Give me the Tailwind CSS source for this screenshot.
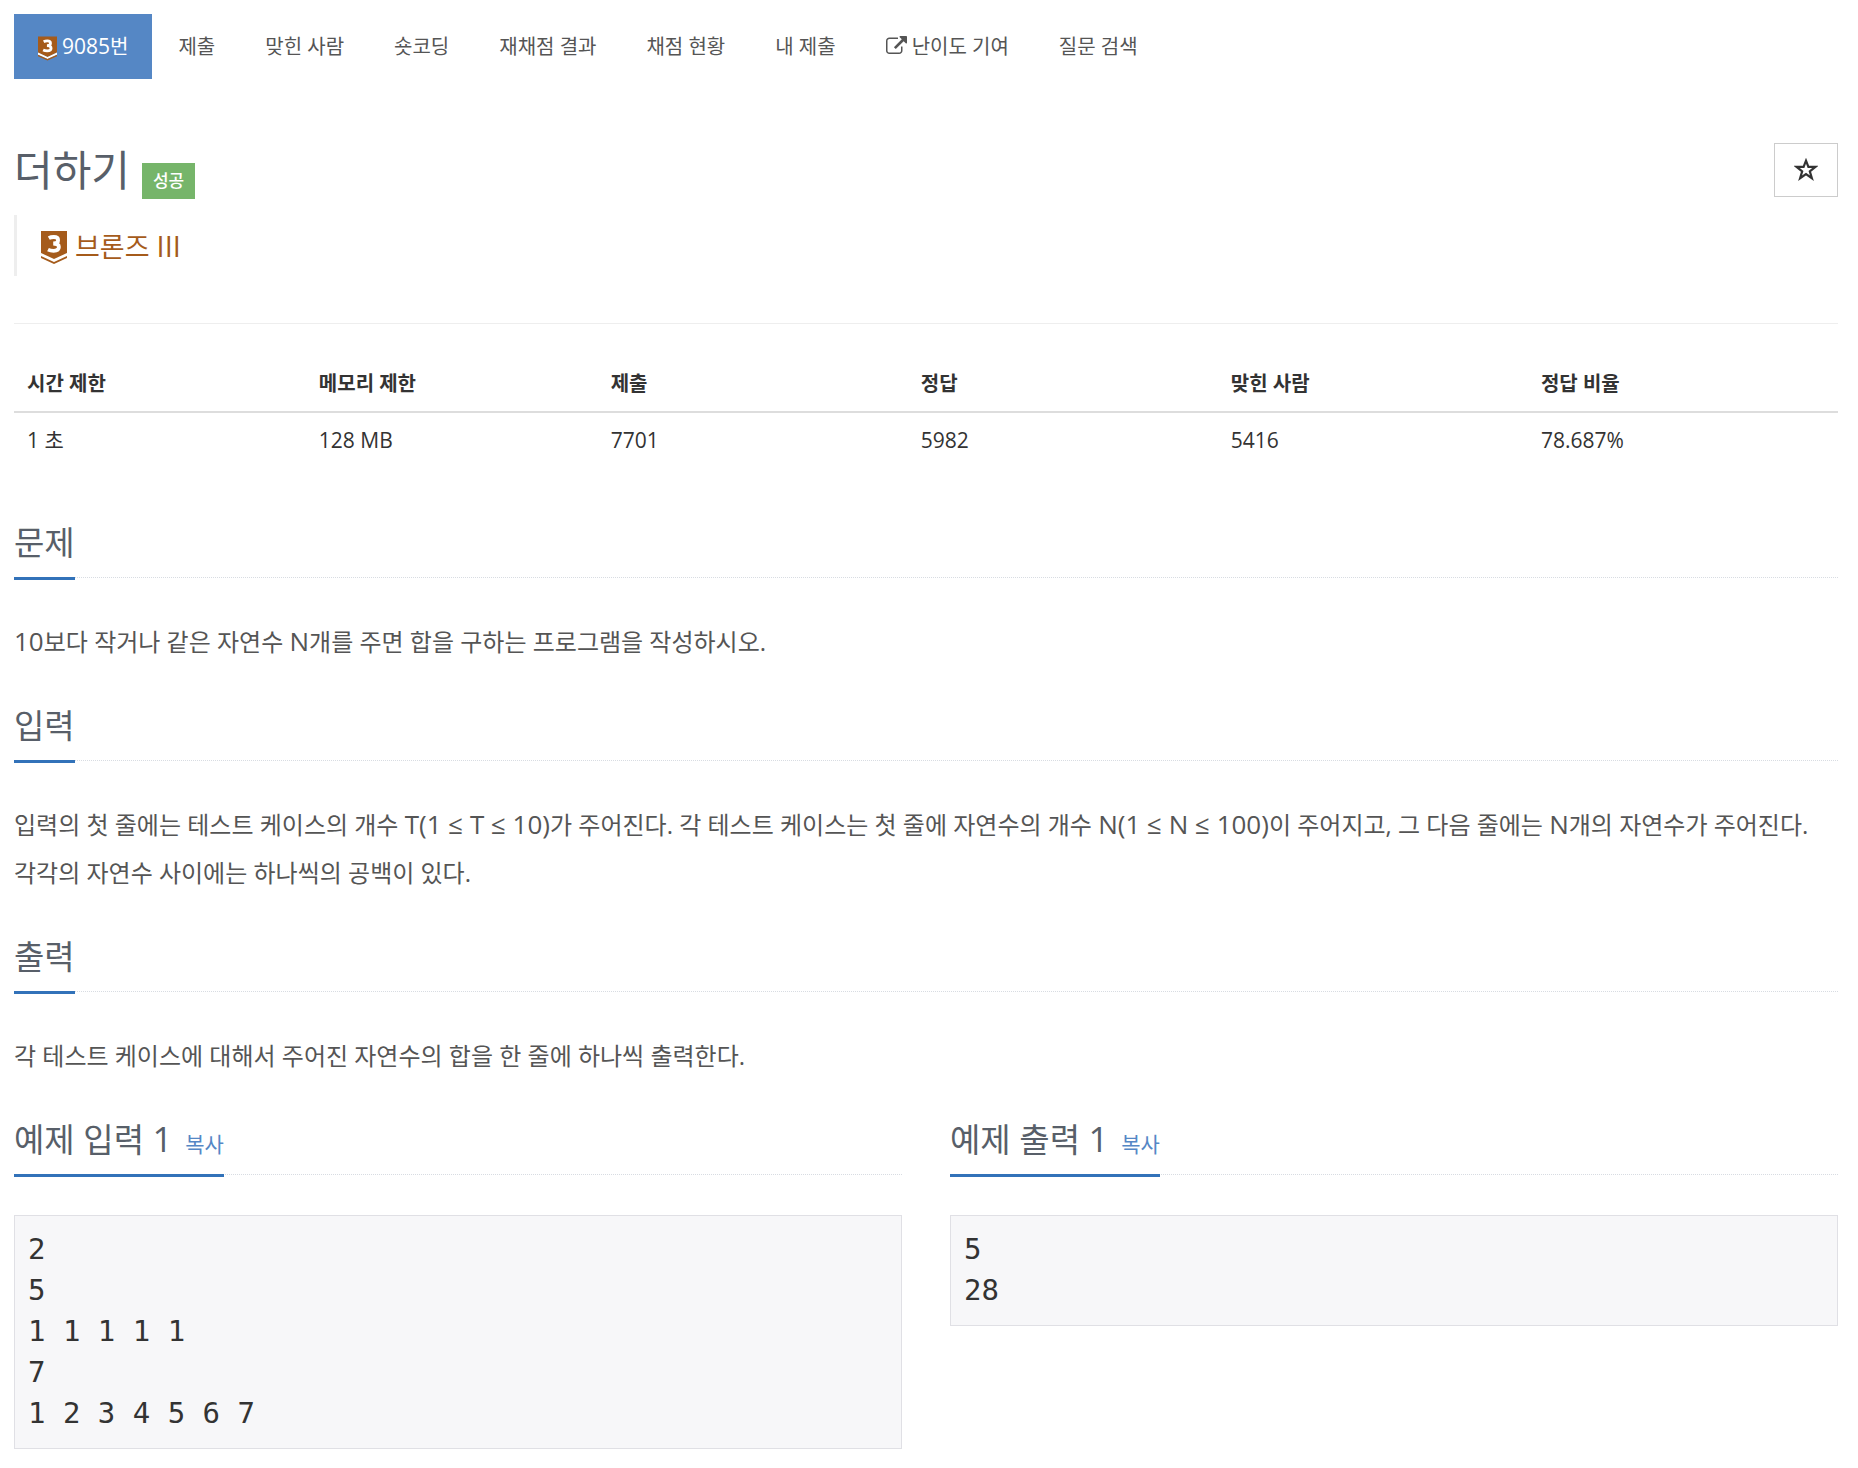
<!DOCTYPE html>
<html lang="ko">

<head>
    <meta charset="UTF-8" />
    <meta name="viewport" content="width=device-width, initial-scale=1.0" />
    <title>9085번: 더하기</title>
    <script src="https://cdn.jsdelivr.net/npm/@tailwindcss/browser@4"></script>
</head>

<body class="bg-white pt-[14px] pr-5 pb-[18px] pl-[14px] font-['Open_Sans','Noto_Sans_CJK_KR',sans-serif] text-[20px] leading-[29px] text-[#333333]">
    <nav>
        <ul class="flex flex-wrap gap-[2px] text-[#555555]">
            <li>
                <a href="#" class="flex items-center gap-[5px] bg-[#5587c5] px-6 py-[18px] text-white">
                    <svg class="mt-1 h-[25px] w-[19px]" viewBox="0 0 26 33" aria-hidden="true">
                        <path fill="#a55b1b" d="M0 0h26v22l-13 6-13-6z" />
                        <path fill="#fff" d="M0 22l13 6 13-6v3l-13 6-13-6z" />
                        <path fill="#a55b1b" d="M0 25l13 6 13-6v2l-13 6-13-6z" />
                        <path fill="none" stroke="#fff" stroke-width="3.8" d="M7.800 7.200c1.500-.9 3.200-1.200 5-1.200 2.900 0 4.300 1.200 4.300 3.200 0 2.200-1.900 3.300-4.900 3.300 3.800 0 5.700 1.300 5.700 3.600 0 2.600-2.300 3.700-5.300 3.700-2 0-4-.4-5.600-1.200" />
                    </svg>
                    <span><span class="text-[21px]">9085</span>번</span>
                </a>
            </li>
            <li><a href="#" class="block px-6 py-[18px]">제출</a></li>
            <li><a href="#" class="block px-6 py-[18px]">맞힌 사람</a></li>
            <li><a href="#" class="block px-6 py-[18px]">숏코딩</a></li>
            <li><a href="#" class="block px-6 py-[18px]">재채점 결과</a></li>
            <li><a href="#" class="block px-6 py-[18px]">채점 현황</a></li>
            <li><a href="#" class="block px-6 py-[18px]">내 제출</a></li>
            <li>
                <a href="#" class="flex items-center gap-[5px] px-6 py-[18px]">
                    <svg class="h-[21px] w-[21px]" viewBox="0 0 1792 1792" fill="currentColor" aria-hidden="true">
                        <path d="M1408 928v320q0 119-84.500 203.500t-203.500 84.500h-832q-119 0-203.500-84.500t-84.500-203.500v-832q0-119 84.500-203.500t203.500-84.500h704q14 0 23 9t9 23v64q0 14-9 23t-23 9h-704q-66 0-113 47t-47 113v832q0 66 47 113t113 47h832q66 0 113-47t47-113v-320q0-14 9-23t23-9h64q14 0 23 9t9 23zm384-864v512q0 26-19 45t-45 19-45-19l-176-176-652 652q-10 10-23 10t-23-10l-114-114q-10-10-10-23t10-23l652-652-176-176q-19-19-19-45t19-45 45-19h512q26 0 45 19t19 45z" />
                    </svg>
                    난이도 기여
                </a>
            </li>
            <li><a href="#" class="block px-6 py-[18px]">질문 검색</a></li>
        </ul>
    </nav>

    <header class="mt-16 flex items-start justify-between">
        <div class="flex items-end gap-3">
            <h1 class="pb-[2px] text-[42px] leading-[54px] text-[#585f69]">더하기</h1>
            <span class="bg-[#76b56a] px-[11px] text-[17px] leading-9 font-medium text-white">성공</span>
        </div>
        <button type="button" aria-label="즐겨찾기" class="flex h-[54px] w-16 items-center justify-center border border-[#cccccc]">
            <svg class="h-6 w-6" viewBox="0 0 22 22" aria-hidden="true">
                <path fill="none" stroke="#333" stroke-width="2" d="M11 2.500l2.200 5.700h6.300l-5 4 1.900 6.300L11 14.700l-5.400 3.800 1.900-6.300-5-4h6.300z" />
            </svg>
        </button>
    </header>

    <blockquote class="mt-4 flex h-[61px] items-center gap-2 border-l-[3px] border-[#eeeeee] pl-6 text-[27px] text-[#a55b1b]">
        <svg class="mt-1 h-[33px] w-[26px]" viewBox="0 0 26 33" aria-hidden="true">
            <path fill="#a55b1b" d="M0 0h26v22l-13 6-13-6z" />
            <path fill="#a55b1b" d="M0 25l13 6 13-6v2l-13 6-13-6z" />
            <path fill="none" stroke="#fff" stroke-width="3.8" d="M7.800 7.200c1.500-.9 3.200-1.200 5-1.200 2.900 0 4.300 1.200 4.300 3.200 0 2.200-1.900 3.300-4.900 3.300 3.800 0 5.700 1.300 5.700 3.600 0 2.600-2.300 3.700-5.300 3.700-2 0-4-.4-5.600-1.200" />
        </svg>
        <span>브론즈 <span class="text-[29px]">III</span></span>
    </blockquote>

    <hr class="mt-[47px] border-[#eeeeee]" />

    <table class="mt-8 w-full table-fixed text-left">
        <thead class="border-b-2 border-[#dddddd]">
            <tr>
                <th class="w-[16%] p-[13px]">시간 제한</th>
                <th class="w-[16%] p-[13px]">메모리 제한</th>
                <th class="w-[17%] p-[13px]">제출</th>
                <th class="w-[17%] p-[13px]">정답</th>
                <th class="w-[17%] p-[13px]">맞힌 사람</th>
                <th class="w-[17%] p-[13px]">정답 비율</th>
            </tr>
        </thead>
        <tbody class="text-[21px]">
            <tr>
                <td class="p-[13px]">1 초</td>
                <td class="p-[13px]">128 MB</td>
                <td class="p-[13px]">7701</td>
                <td class="p-[13px]">5982</td>
                <td class="p-[13px]">5416</td>
                <td class="p-[13px]">78.687%</td>
            </tr>
        </tbody>
    </table>

    <main class="mt-[51px] text-[24px] leading-[48px] break-keep text-[#555555]">
        <section>
            <div class="mb-10 flex border-b border-dotted border-[#d8dce2]">
                <h2 class="-mb-[3px] border-b-[3px] border-[#3272b9] pb-[10px] text-[33px] text-[#585f69]">문제</h2>
            </div>
            <p><span class="text-[26px] leading-none">10</span>보다 작거나 같은 자연수 <span class="text-[26px] leading-none">N</span>개를 주면 합을 구하는 프로그램을 작성하시오.</p>
        </section>

        <section class="mt-9">
            <div class="mb-10 flex border-b border-dotted border-[#d8dce2]">
                <h2 class="-mb-[3px] border-b-[3px] border-[#3272b9] pb-[10px] text-[33px] text-[#585f69]">입력</h2>
            </div>
            <p>입력의 첫 줄에는 테스트 케이스의 개수 <span class="text-[26px] leading-none">T(1 ≤ T ≤ 10)</span>가 주어진다. 각 테스트 케이스는 첫 줄에 자연수의 개수 <span class="text-[26px] leading-none">N(1 ≤ N ≤ 100)</span>이 주어지고, 그 다음 줄에는 <span class="text-[26px] leading-none">N</span>개의 자연수가 주어진다.<br />
                각각의 자연수 사이에는 하나씩의 공백이 있다.</p>
        </section>

        <section class="mt-9">
            <div class="mb-10 flex border-b border-dotted border-[#d8dce2]">
                <h2 class="-mb-[3px] border-b-[3px] border-[#3272b9] pb-[10px] text-[33px] text-[#585f69]">출력</h2>
            </div>
            <p>각 테스트 케이스에 대해서 주어진 자연수의 합을 한 줄에 하나씩 출력한다.</p>
        </section>

        <div class="mt-9 grid grid-cols-2 items-start gap-12">
            <section>
                <div class="mb-10 flex border-b border-dotted border-[#d8dce2]">
                    <h2 class="-mb-[3px] border-b-[3px] border-[#3272b9] pb-[10px] text-[33px] text-[#585f69]">예제 입력 <span class="text-[35px] leading-none">1</span> <button type="button" class="ml-1 text-[21px] leading-none text-[#5587c5]">복사</button></h2>
                </div>
                <pre class="border border-[#e0e0e5] bg-[#f7f7f9] p-[13px] pb-[14px] font-['DejaVu_Sans_Mono',monospace] text-[29px] leading-[41px] text-[#333333]">2
5
1 1 1 1 1
7
1 2 3 4 5 6 7</pre>
            </section>
            <section>
                <div class="mb-10 flex border-b border-dotted border-[#d8dce2]">
                    <h2 class="-mb-[3px] border-b-[3px] border-[#3272b9] pb-[10px] text-[33px] text-[#585f69]">예제 출력 <span class="text-[35px] leading-none">1</span> <button type="button" class="ml-1 text-[21px] leading-none text-[#5587c5]">복사</button></h2>
                </div>
                <pre class="border border-[#e0e0e5] bg-[#f7f7f9] p-[13px] pb-[14px] font-['DejaVu_Sans_Mono',monospace] text-[29px] leading-[41px] text-[#333333]">5
28</pre>
            </section>
        </div>
    </main>
</body>

</html>
